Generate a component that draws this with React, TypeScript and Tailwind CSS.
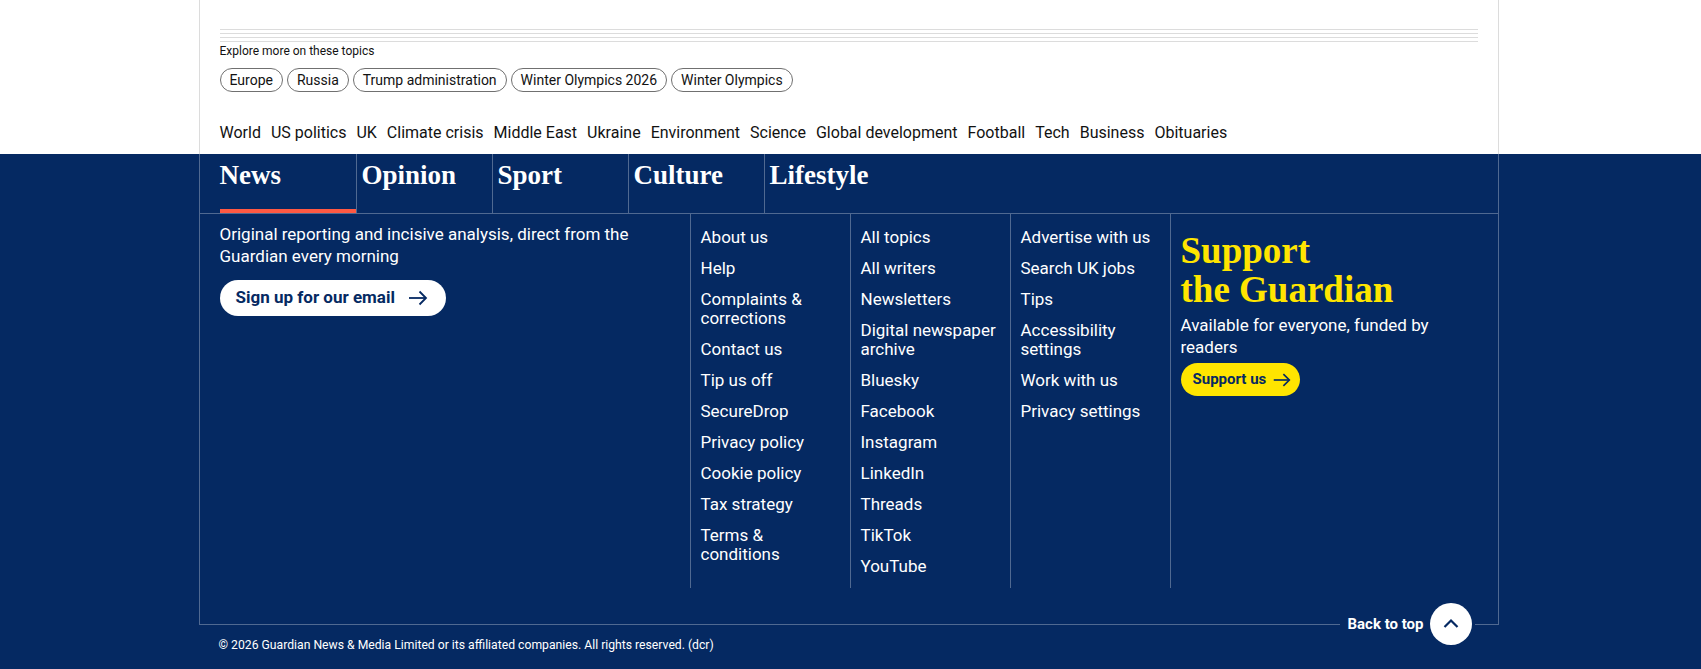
import React from "react";

const topics = ["Europe", "Russia", "Trump administration", "Winter Olympics 2026", "Winter Olympics"];

const sections = [
  "World",
  "US politics",
  "UK",
  "Climate crisis",
  "Middle East",
  "Ukraine",
  "Environment",
  "Science",
  "Global development",
  "Football",
  "Tech",
  "Business",
  "Obituaries",
];

const pillars = ["News", "Opinion", "Sport", "Culture", "Lifestyle"];

const linkColumns = [
  [
    "About us",
    "Help",
    "Complaints & corrections",
    "Contact us",
    "Tip us off",
    "SecureDrop",
    "Privacy policy",
    "Cookie policy",
    "Tax strategy",
    "Terms & conditions",
  ],
  [
    "All topics",
    "All writers",
    "Newsletters",
    "Digital newspaper archive",
    "Bluesky",
    "Facebook",
    "Instagram",
    "LinkedIn",
    "Threads",
    "TikTok",
    "YouTube",
  ],
  ["Advertise with us", "Search UK jobs", "Tips", "Accessibility settings", "Work with us", "Privacy settings"],
];

const sans = "font-['Roboto','Liberation_Sans',sans-serif]";
const serif = "font-['Liberation_Serif','DejaVu_Serif',serif]";

function Arrow({ className }: { className?: string }) {
  return (
    <svg viewBox="0 0 24 24" className={className} fill="none" stroke="currentColor" strokeWidth="1.8">
      <path d="M3 12h17" />
      <path d="M13.5 5.5 20 12l-6.5 6.5" />
    </svg>
  );
}

export default function App() {
  return (
    <div className={`${sans} w-full`}>
      {/* topics + sections */}
      <div className="bg-white pr-1">
        <div className="mx-auto h-[154px] w-[1300px] border-x border-[#dcdcdc] px-5 pt-[29px] text-[#121212]">
          <div className="flex flex-col gap-[3px]">
            <div className="h-px bg-[#dcdcdc]" />
            <div className="h-px bg-[#dcdcdc]" />
            <div className="h-px bg-[#dcdcdc]" />
            <div className="h-px bg-[#dcdcdc]" />
          </div>
          <p className="mt-px text-[12px] leading-4">Explore more on these topics</p>
          <div className="mt-[9px] flex gap-1">
            {topics.map((t) => (
              <span
                key={t}
                className="flex h-6 items-center rounded-full border border-[#707070] px-[9px] text-[14px] leading-none"
              >
                {t}
              </span>
            ))}
          </div>
          <nav className="mt-[31px] flex gap-x-[10px] text-[16px] leading-5">
            {sections.map((s) => (
              <a key={s}>{s}</a>
            ))}
          </nav>
        </div>
      </div>

      {/* footer */}
      <footer className="bg-[#052962] pr-1 text-white">
        <div className="relative mx-auto h-[471px] w-[1300px] border-x border-b border-[#506991]">
          <div className="flex h-[60px] border-b border-[#506991] pl-5">
            {pillars.map((p, i) => (
              <div
                key={p}
                className={`flex w-[136px] flex-col justify-between ${i > 0 ? "border-l border-[#506991] pl-[5px]" : ""}`}
              >
                <span className={`${serif} pt-[6px] text-[27px] font-bold leading-[30px]`}>{p}</span>
                {i === 0 && <span className="h-1 bg-[#ff5943]" />}
              </div>
            ))}
          </div>

          <div className="flex pl-5">
            <div className="w-[470px] pt-[9px]">
              <p className="w-[430px] text-[17px] leading-[22px]">
                Original reporting and incisive analysis, direct from the Guardian every morning
              </p>
              <button className="mt-[13px] flex h-9 items-center gap-[11px] rounded-full bg-white pl-4 pr-4 text-[17px] font-bold text-[#052962]">
                Sign up for our email
                <Arrow className="h-6 w-6" />
              </button>
            </div>

            {linkColumns.map((col, i) => (
              <ul key={i} className="w-40 border-l border-[#506991] pl-[10px] pr-2 pt-[14px] text-[17px] leading-[19px]">
                {col.map((l) => (
                  <li key={l} className="pb-3">
                    {l}
                  </li>
                ))}
              </ul>
            ))}

            <div className="flex-1 border-l border-[#506991] pl-[10px] pt-[17px]">
              <h2 className={`${serif} text-[37px] font-bold leading-[39px] text-[#ffe500]`}>
                Support
                <br />
                the Guardian
              </h2>
              <p className="mt-[5px] w-[260px] text-[17px] leading-[22px]">
                Available for everyone, funded by readers
              </p>
              <button className="mt-[5px] flex h-[33px] items-center gap-[5px] rounded-full bg-[#ffe500] pl-[12px] pr-[7px] text-[15px] font-bold text-[#052962]">
                Support us
                <Arrow className="h-[22px] w-[22px]" />
              </button>
            </div>
          </div>

          <a className="absolute -bottom-[21px] right-[23px] flex items-center gap-[6px] bg-[#052962] pl-[7px] pr-[3px] text-[15px] font-bold">
            Back to top
            <span className="flex h-[42px] w-[42px] items-center justify-center rounded-full bg-white text-[#052962]">
              <svg viewBox="0 0 24 24" className="h-6 w-6" fill="none" stroke="currentColor" strokeWidth="2.2">
                <path d="M5.5 15 12 8.5l6.5 6.5" />
              </svg>
            </span>
          </a>
        </div>
        <div className="mx-auto w-[1300px] pl-5 pb-[19px] pt-[12px] text-[12.2px] leading-4">
          © 2026 Guardian News &amp; Media Limited or its affiliated companies. All rights reserved. (dcr)
        </div>
      </footer>
    </div>
  );
}
